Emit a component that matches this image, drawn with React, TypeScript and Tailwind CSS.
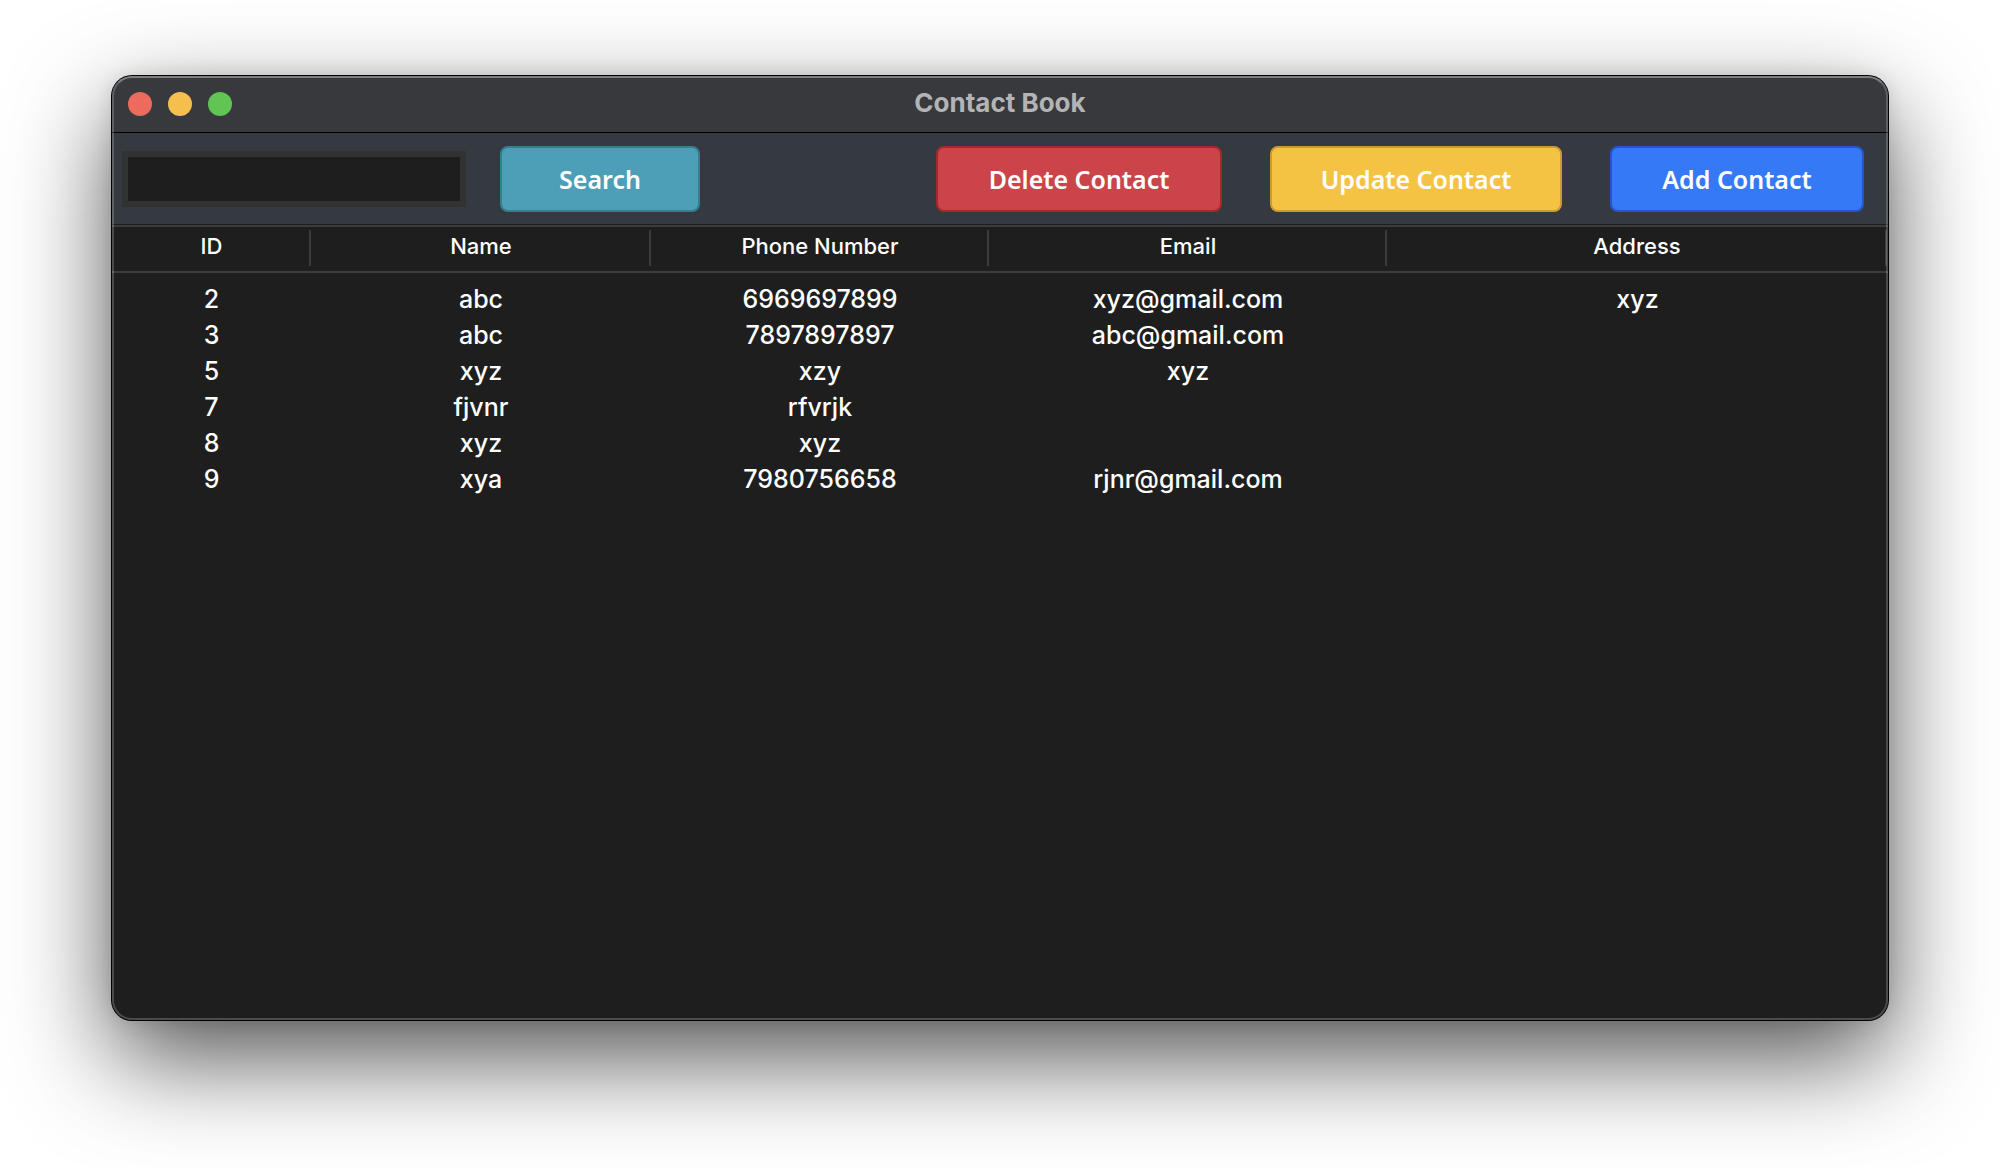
import React from "react";

type Contact = {
  id: number;
  name: string;
  phone: string;
  email: string;
  address: string;
};

const contacts: Contact[] = [
  { id: 2, name: "abc", phone: "6969697899", email: "xyz@gmail.com", address: "xyz" },
  { id: 3, name: "abc", phone: "7897897897", email: "abc@gmail.com", address: "" },
  { id: 5, name: "xyz", phone: "xzy", email: "xyz", address: "" },
  { id: 7, name: "fjvnr", phone: "rfvrjk", email: "", address: "" },
  { id: 8, name: "xyz", phone: "xyz", email: "", address: "" },
  { id: 9, name: "xya", phone: "7980756658", email: "rjnr@gmail.com", address: "" },
];

const columns = [
  { label: "ID", width: "w-[199px]" },
  { label: "Name", width: "w-[340px]" },
  { label: "Phone Number", width: "w-[338px]" },
  { label: "Email", width: "w-[398px]" },
  { label: "Address", width: "" },
];

function ToolButton({ className, children }: { className: string; children: React.ReactNode }) {
  return (
    <button
      type="button"
      className={`h-[66px] shrink-0 rounded-lg border-2 text-center font-['Chalkboard','Noto_Sans',sans-serif] text-[25px] leading-8 font-semibold text-white ${className}`}
    >
      {children}
    </button>
  );
}

function TitleBar() {
  return (
    <header className="grid h-[57px] shrink-0 grid-cols-[1fr_auto_1fr] items-center border-b border-black bg-[#38393c] px-4">
      <div className="flex gap-4">
        <button type="button" aria-label="Close" className="size-6 rounded-full bg-[#ed6a5e]" />
        <button type="button" aria-label="Minimize" className="size-6 rounded-full bg-[#f5bf4f]" />
        <button type="button" aria-label="Zoom" className="size-6 rounded-full bg-[#61c554]" />
      </div>
      <h1 className="pb-0.5 text-[26px] leading-8 font-bold text-[#b4b4b7]">Contact Book</h1>
    </header>
  );
}

function Toolbar() {
  return (
    <div className="flex h-[92px] shrink-0 items-center border-b border-[#1e1e1e] bg-[#353a40] pr-6 pl-[10px]">
      <input
        type="text"
        aria-label="Search contacts"
        className="h-14 w-[344px] border-[6px] border-[#323232] bg-[#1e1e1e] px-2 text-2xl text-white outline-none"
      />
      <ToolButton className="ml-[34px] w-[200px] border-[#357f93] bg-[#4c9fb6]">Search</ToolButton>
      <div className="ml-auto flex gap-12">
        <ToolButton className="w-[286px] border-[#a5282c] bg-[#ca444a]">Delete Contact</ToolButton>
        <ToolButton className="w-[292px] border-[#cf9a35] bg-[#f5c344]">Update Contact</ToolButton>
        <ToolButton className="w-[254px] border-[#2456d0] bg-[#3579f7]">Add Contact</ToolButton>
      </div>
    </div>
  );
}

function ContactTable() {
  return (
    <div className="grow border-t-2 border-[#3c3c3c]">
      <table className="w-full table-fixed border-separate border-spacing-0 text-center">
        <thead>
          <tr>
            {columns.map((column) => (
              <th
                key={column.label}
                scope="col"
                className={`h-[46px] border-b-2 border-[#3c3c3c] p-0 pt-[3px] pb-[5px] text-[22px] font-medium last:pr-px ${column.width}`}
              >
                <span className="block border-r-2 border-[#3c3c3c] pb-1 pl-0.5 leading-8">{column.label}</span>
              </th>
            ))}
          </tr>
        </thead>
        <tbody className="text-[25px] leading-9 font-medium before:block before:h-2">
          {contacts.map((contact) => (
            <tr key={contact.id} className="h-9">
              <td className="p-0">{contact.id}</td>
              <td className="p-0">{contact.name}</td>
              <td className="p-0">{contact.phone}</td>
              <td className="p-0">{contact.email}</td>
              <td className="p-0">{contact.address}</td>
            </tr>
          ))}
        </tbody>
      </table>
    </div>
  );
}

export default function App() {
  return (
    <div className="flex min-h-screen bg-white px-28 pt-19 pb-37 font-[Inter,sans-serif]">
      <main className="relative flex grow flex-col rounded-[20px] bg-[#1e1e1e] text-white shadow-[0_0_0_1px_#000,0_38px_100px_rgba(0,0,0,0.68),0_0_20px_rgba(0,0,0,0.12)]">
        <div className="flex grow flex-col overflow-hidden rounded-[20px]">
          <TitleBar />
          <Toolbar />
          <ContactTable />
        </div>
        <div className="pointer-events-none absolute inset-0 rounded-[20px] border-2 border-white/20 border-t-white/35" />
      </main>
    </div>
  );
}
